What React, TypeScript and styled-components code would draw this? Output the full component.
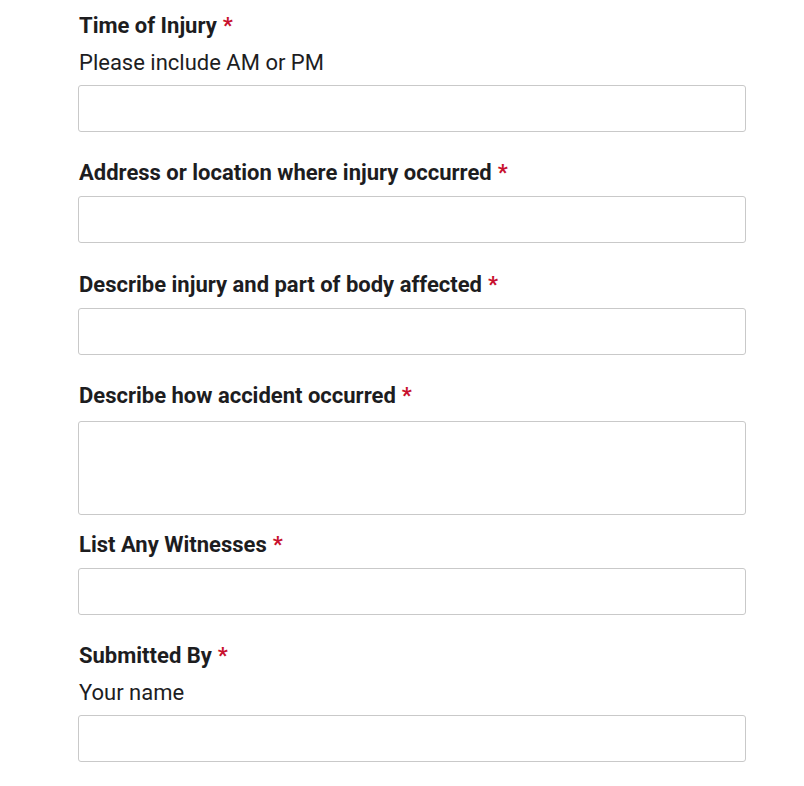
import React from "react";
import styled, { createGlobalStyle } from "styled-components";

const GlobalStyle = createGlobalStyle`
  body {
    margin: 0;
    background: #ffffff;
    font-family: Roboto, "Liberation Sans", sans-serif;
    color: #1d1d1f;
  }
`;

const Form = styled.form`
  width: 668px;
  padding: 11px 0 0 78px;
`;

const Field = styled.div<{ $tight?: boolean }>`
  display: flex;
  flex-direction: column;
  margin-bottom: ${(p) => (p.$tight ? "15px" : "26.3px")};
`;

const Label = styled.label<{ $gap?: number }>`
  font-size: 22px;
  font-weight: 700;
  line-height: 30px;
  margin: 0 0 ${(p) => p.$gap ?? 8}px 1px;
  color: #1d1d1f;
`;

const Required = styled.span`
  color: #c8102e;
  margin-left: 6px;
`;

const Help = styled.div`
  font-size: 22px;
  line-height: 30px;
  margin: -1px 0 7px 1px;
  color: #1d1d1f;
`;

const Input = styled.input`
  box-sizing: border-box;
  width: 100%;
  height: 47px;
  border: 1px solid #c9c9c9;
  border-radius: 3px;
  padding: 0 12px;
  font-family: inherit;
  font-size: 18px;
  background: #ffffff;
  margin: 0;
`;

const TextArea = styled.textarea`
  box-sizing: border-box;
  display: block;
  width: 100%;
  height: 94px;
  border: 1px solid #c9c9c9;
  border-radius: 3px;
  padding: 10px 12px;
  font-family: inherit;
  font-size: 18px;
  resize: none;
  margin: 0;
`;

const fields = [
  { label: "Time of Injury", help: "Please include AM or PM" },
  { label: "Address or location where injury occurred" },
  { label: "Describe injury and part of body affected" },
  { label: "Describe how accident occurred", multiline: true },
  { label: "List Any Witnesses" },
  { label: "Submitted By", help: "Your name" },
];

const App: React.FC = () => {
  return (
    <>
      <GlobalStyle />
      <Form onSubmit={(e) => e.preventDefault()}>
        {fields.map((f) => (
          <Field key={f.label} $tight={f.multiline}>
            <Label $gap={f.multiline ? 10 : 8}>
              {f.label}
              <Required>*</Required>
            </Label>
            {f.help && <Help>{f.help}</Help>}
            {f.multiline ? <TextArea /> : <Input type="text" />}
          </Field>
        ))}
      </Form>
    </>
  );
};

export default App;
